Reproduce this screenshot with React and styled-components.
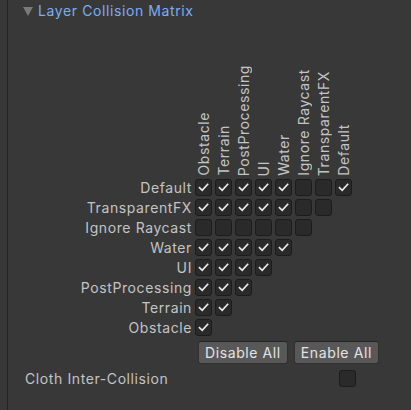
import React from "react";
import styled, { createGlobalStyle } from "styled-components";

const Global = createGlobalStyle`
  html, body { margin: 0; padding: 0; background: #383838; }
  body {
    font-family: Inter, "Noto Sans", sans-serif;
    font-size: 14px;
    letter-spacing: 0.6px;
    color: #c4c4c4;
  }
`;

const Page = styled.div`
  width: 411px;
  height: 410px;
  padding-left: 7px;
  box-sizing: border-box;
  background: #383838;
  overflow: hidden;
`;

const Panel = styled.div`
  height: 100%;
  border-left: 1px solid #232323;
  display: flex;
  flex-direction: column;
`;

const Foldout = styled.div`
  display: flex;
  align-items: center;
  height: 22px;
  padding-left: 15px;
  gap: 5px;
`;

const Arrow = styled.div`
  width: 0;
  height: 0;
  border-left: 5px solid transparent;
  border-right: 5px solid transparent;
  border-top: 9px solid #7a7a7a;
`;

const Title = styled.span`
  color: #7badf5;
  line-height: 1;
`;

const Matrix = styled.div`
  display: flex;
  flex-direction: column;
  margin-top: 36px;
`;

const Header = styled.div`
  display: flex;
  align-items: flex-end;
  padding-left: 187px;
  gap: 3px;
  height: 118px;
`;

const ColLabel = styled.div`
  width: 17px;
  display: flex;
  justify-content: center;
  writing-mode: vertical-rl;
  transform: rotate(180deg);
  white-space: nowrap;
  line-height: 17px;
  color: #c4c4c4;
`;

const Row = styled.div`
  display: flex;
  align-items: center;
  height: 17px;
  margin-top: 3px;
`;

const RowLabel = styled.div`
  width: 184px;
  text-align: right;
  padding-right: 3px;
  white-space: nowrap;
  line-height: 17px;
`;

const Cells = styled.div`
  display: flex;
  gap: 3px;
`;

const Box = styled.div`
  width: 17px;
  height: 17px;
  box-sizing: border-box;
  background: #2a2a2a;
  border: 1px solid #1c1c1c;
  border-radius: 3px;
  display: flex;
  align-items: center;
  justify-content: center;
`;

const Buttons = styled.div`
  display: flex;
  gap: 6px;
  padding-left: 190px;
  margin-top: 5px;
`;

const Button = styled.button`
  height: 23px;
  padding: 0 ${(p) => p.$pad}px;
  background: #585858;
  border: 1px solid #303030;
  border-top-color: #242424;
  border-radius: 3px;
  color: #e4e4e4;
  font-family: inherit;
  font-size: 14px;
  letter-spacing: 0.6px;
  line-height: 21px;
`;

const ClothRow = styled.div`
  display: flex;
  align-items: center;
  justify-content: space-between;
  padding-left: 17px;
  width: 331px;
  margin-top: 6px;
  height: 17px;
`;

const ClothLabel = styled.span`
  color: #c4c4c4;
  line-height: 17px;
`;

const Check = () => (
  <svg width="13" height="13" viewBox="0 0 13 13">
    <path
      d="M2.6 6.8 L5.2 9.3 L10.6 3.4"
      fill="none"
      stroke="#ececec"
      strokeWidth="1.7"
      strokeLinecap="square"
      strokeLinejoin="miter"
    />
  </svg>
);

const Toggle = ({ on }) => <Box>{on && <Check />}</Box>;

const cols = [
  "Obstacle",
  "Terrain",
  "PostProcessing",
  "UI",
  "Water",
  "Ignore Raycast",
  "TransparentFX",
  "Default",
];

const rows = [
  { name: "Default", v: [1, 1, 1, 1, 1, 0, 0, 1] },
  { name: "TransparentFX", v: [1, 1, 1, 1, 1, 0, 0] },
  { name: "Ignore Raycast", v: [0, 0, 0, 0, 0, 0] },
  { name: "Water", v: [1, 1, 1, 1, 1] },
  { name: "UI", v: [1, 1, 1, 1] },
  { name: "PostProcessing", v: [1, 1, 1] },
  { name: "Terrain", v: [1, 1] },
  { name: "Obstacle", v: [1] },
];

export default function App() {
  return (
    <>
      <Global />
      <Page>
        <Panel>
          <Foldout>
            <Arrow />
            <Title>Layer Collision Matrix</Title>
          </Foldout>
          <Matrix>
            <Header>
              {cols.map((c) => (
                <ColLabel key={c}>{c}</ColLabel>
              ))}
            </Header>
            {rows.map((r) => (
              <Row key={r.name}>
                <RowLabel>{r.name}</RowLabel>
                <Cells>
                  {r.v.map((on, i) => (
                    <Toggle key={i} on={!!on} />
                  ))}
                </Cells>
              </Row>
            ))}
          </Matrix>
          <Buttons>
            <Button $pad={6}>Disable All</Button>
            <Button $pad={6}>Enable All</Button>
          </Buttons>
          <ClothRow>
            <ClothLabel>Cloth Inter-Collision</ClothLabel>
            <Toggle on={false} />
          </ClothRow>
        </Panel>
      </Page>
    </>
  );
}
